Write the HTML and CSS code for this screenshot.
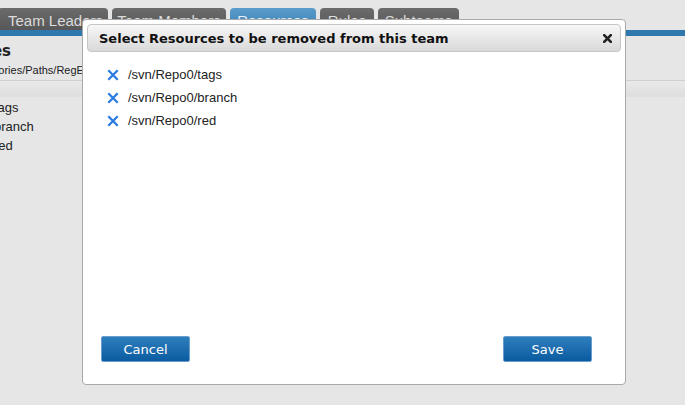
FILE: index.html
```html
<!DOCTYPE html>
<html lang="en">
<head>
    <meta charset="UTF-8">
    <title>Team Resources</title>
    <link rel="stylesheet" href="styles.css">
</head>
<body>
    <div class="tabs">
        <div class="tab tab-leaders">Team Leaders</div>
        <div class="tab tab-members">Team Members</div>
        <div class="tab tab-resources active">Resources</div>
        <div class="tab tab-rules">Rules</div>
        <div class="tab tab-subteams">Subteams</div>
    </div>
    <div class="tab-line"></div>

    <div class="panel">
        <h2 class="panel-title">Resources</h2>
        <div class="panel-hint">Repositories/Paths/RegEx</div>
        <div class="panel-head"></div>
        <ul class="panel-list">
            <li>tags</li>
            <li>branch</li>
            <li>red</li>
        </ul>
    </div>

    <div class="overlay">
        <div class="dialog">
            <div class="dialog-titlebar">
                <span class="dialog-title">Select Resources to be removed from this team</span>
                <span class="dialog-close">
                    <svg width="9" height="9" viewBox="0 0 9 9"><path d="M1.2 1.2L7.8 7.8M7.8 1.2L1.2 7.8" stroke="#222" stroke-width="2.6" stroke-linecap="square"/></svg>
                </span>
            </div>
            <ul class="dialog-list">
                <li>
                    <svg class="remove-icon" width="12" height="12" viewBox="0 0 12 12"><path d="M1.3 1.3L10.7 10.7M10.7 1.3L1.3 10.7" stroke="#2a7be4" stroke-width="2.3"/></svg>
                    <span>/svn/Repo0/tags</span>
                </li>
                <li>
                    <svg class="remove-icon" width="12" height="12" viewBox="0 0 12 12"><path d="M1.3 1.3L10.7 10.7M10.7 1.3L1.3 10.7" stroke="#2a7be4" stroke-width="2.3"/></svg>
                    <span>/svn/Repo0/branch</span>
                </li>
                <li>
                    <svg class="remove-icon" width="12" height="12" viewBox="0 0 12 12"><path d="M1.3 1.3L10.7 10.7M10.7 1.3L1.3 10.7" stroke="#2a7be4" stroke-width="2.3"/></svg>
                    <span>/svn/Repo0/red</span>
                </li>
            </ul>
            <div class="dialog-footer">
                <button class="btn">Cancel</button>
                <button class="btn">Save</button>
            </div>
        </div>
    </div>
</body>
</html>
```

FILE: styles.css
```css
body {
    margin: 0;
    background-color: #e6e6e6;
    font-family: 'DejaVu Sans', Verdana, sans-serif;
    color: #222;
    overflow: hidden;
    height: 405px;
    position: relative;
}

.tabs {
    display: flex;
    gap: 4px;
    padding-top: 8px;
    margin-left: -2px;
}

.tab {
    height: 22px;
    line-height: 25px;
    border-radius: 4px 4px 0 0;
    background: linear-gradient(#6b6b6b, #575757);
    color: #dcdcdc;
    font-family: 'Liberation Sans', Arial, sans-serif;
    font-size: 15px;
    text-align: center;
    box-sizing: border-box;
}

.tab-leaders { width: 110px; padding-left: 10px; text-align: left; }
.tab-members { width: 114px; }
.tab-resources { width: 86px; }
.tab-rules { width: 54px; }
.tab-subteams { width: 81px; }

.tab.active {
    background: linear-gradient(#5a9ccb, #3a80b4);
    color: #e6eff7;
}

.tab-line {
    height: 6px;
    background-color: #2f78ad;
}

.panel {
    margin-left: -60px;
}

.panel-title {
    font-size: 15px;
    font-weight: bold;
    margin: 6px 0 0 -16px;
    height: 19px;
    line-height: 19px;
}

.panel-hint {
    font-family: 'Liberation Sans', Arial, sans-serif;
    font-size: 11px;
    margin: 3px 0 0 21px;
    height: 13px;
    line-height: 13px;
}

.panel-head {
    margin-top: 3px;
    height: 16px;
    border-top: 1px solid #cfcfcf;
    background: linear-gradient(#e9e9e9, #dedede);
}

.panel-list {
    list-style: none;
    margin: 1px 0 0 54px;
    padding: 0;
    font-family: 'Liberation Sans', Arial, sans-serif;
    font-size: 13px;
}

.panel-list li {
    height: 19px;
    line-height: 19px;
}

.overlay {
    position: absolute;
    left: 0;
    top: 0;
    right: 0;
    bottom: 0;
}

.dialog {
    position: absolute;
    left: 82px;
    top: 19px;
    width: 544px;
    height: 366px;
    box-sizing: border-box;
    background-color: #ffffff;
    border: 1px solid #a9a9a9;
    border-radius: 4px;
    padding: 4px;
    display: flex;
    flex-direction: column;
}

.dialog-titlebar {
    height: 28px;
    box-sizing: border-box;
    border: 1px solid #c6c6c6;
    border-radius: 4px;
    background: linear-gradient(#f7f7f7, #d9d9d9);
    display: flex;
    align-items: center;
    justify-content: space-between;
    padding: 0 8px 0 11px;
}

.dialog-title {
    font-weight: bold;
    font-size: 13px;
    color: #111;
}

.dialog-close {
    display: flex;
}

.dialog-list {
    list-style: none;
    margin: 11px 0 0 0;
    padding: 0 0 0 20px;
    flex: 1;
}

.dialog-list li {
    display: flex;
    align-items: center;
    gap: 9px;
    height: 23px;
    font-family: 'Liberation Sans', Arial, sans-serif;
    font-size: 13px;
    color: #222;
}

.dialog-footer {
    display: flex;
    justify-content: space-between;
    padding: 0 29px 18px 14px;
}

.btn {
    width: 89px;
    height: 26px;
    border: 1px solid #6a9ccc;
    border-radius: 2px;
    background: linear-gradient(#2e7fbd, #0b5ba1);
    color: #ffffff;
    font-family: 'DejaVu Sans', Verdana, sans-serif;
    font-size: 13px;
    padding-top: 2px;
}
```
